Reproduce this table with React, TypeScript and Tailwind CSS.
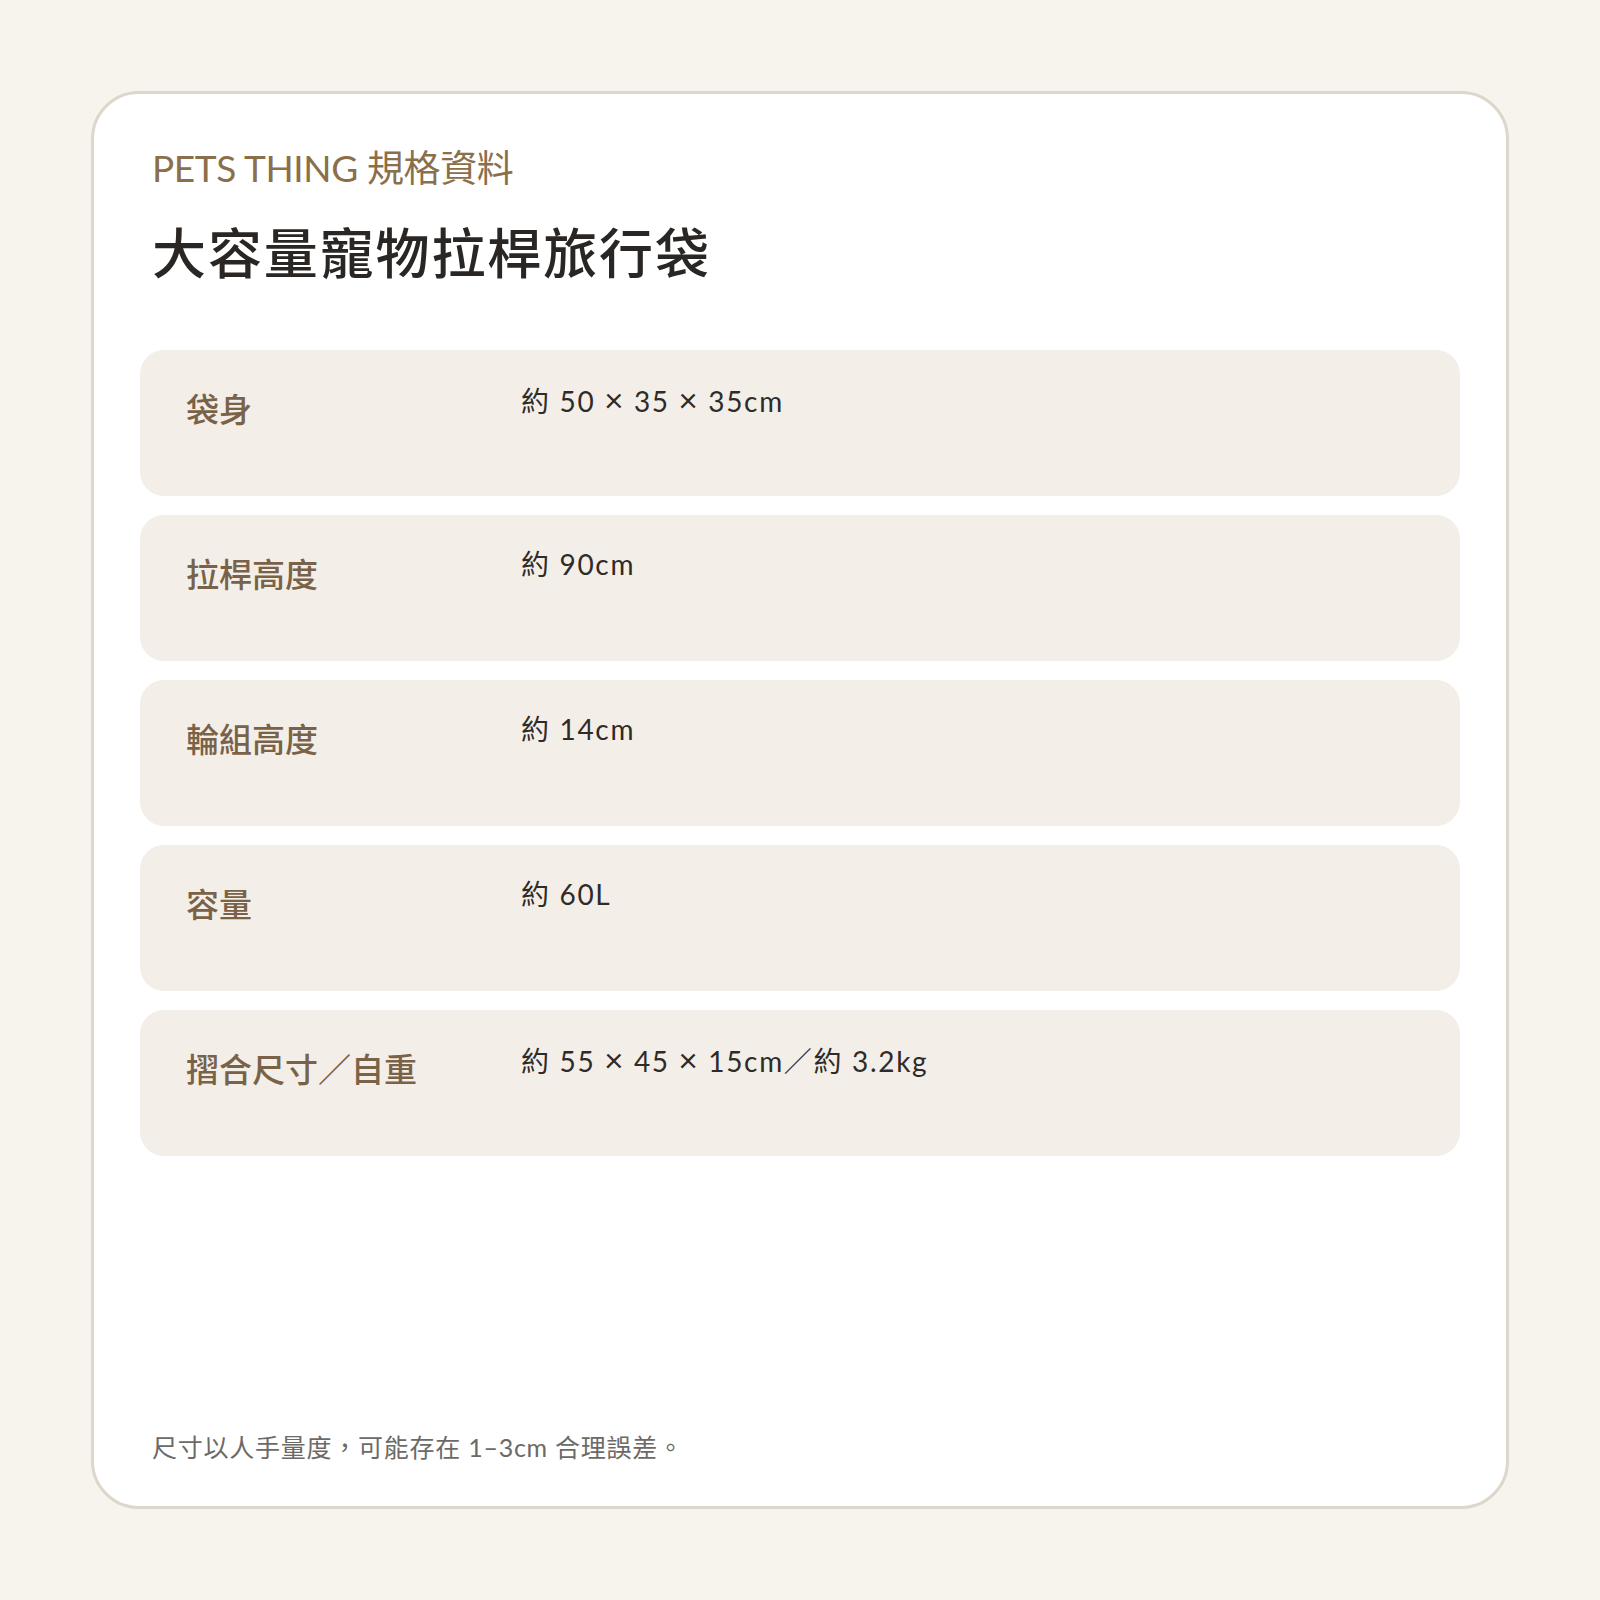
import React from "react"

const specs = [
  { label: "袋身", value: "約 50 × 35 × 35cm" },
  { label: "拉桿高度", value: "約 90cm" },
  { label: "輪組高度", value: "約 14cm" },
  { label: "容量", value: "約 60L" },
  { label: "摺合尺寸／自重", value: "約 55 × 45 × 15cm／約 3.2kg" },
]

function Value({ text }: { text: string }) {
  const parts = text.split("×")
  return (
    <>
      {parts.map((p, i) => (
        <React.Fragment key={i}>
          {p}
          {i < parts.length - 1 && <span className="text-[33px]">×</span>}
        </React.Fragment>
      ))}
    </>
  )
}

export default function App() {
  return (
    <div className="min-h-[1600px] w-full bg-[#f7f4ee] p-[91px] font-['Lato','Noto_Sans_CJK_TC',sans-serif]">
      <div className="flex h-[1418px] w-[1418px] flex-col rounded-[48px] border-[3px] border-[#ddd6ca] bg-white px-[46px]">
        <header className="pl-[12px] pt-[50px]">
          <p className="text-[37px] leading-[1.3] tracking-[-0.01em] text-[#8b6f4a]">
            PETS THING 規格資料
          </p>
          <h1 className="mt-[24px] font-['Noto_Sans_CJK_TC',sans-serif] text-[54px] font-medium leading-[1.3] tracking-[0.035em] text-[#2a2623]">
            大容量寵物拉桿旅行袋
          </h1>
        </header>

        <div className="mt-[64px] flex flex-col gap-[19px]">
          {specs.map((row) => (
            <div
              key={row.label}
              className="flex h-[146px] items-start rounded-3xl bg-[#f3efe8] px-[46px] pt-[34px]"
            >
              <div className="w-[335px] shrink-0 font-['Noto_Sans_CJK_TC',sans-serif] text-[33px] font-medium leading-[1.5] text-[#7a6248]">
                {row.label}
              </div>
              <div className="flex items-center pt-[1px] text-[28px] leading-[28px] tracking-[0.06em] text-[#2e2b28]">
                <span className="whitespace-pre">
                  <Value text={row.value} />
                </span>
              </div>
            </div>
          ))}
        </div>

        <div className="flex-1" />

        <p className="pb-[40px] pl-[12px] text-[25px] leading-[1.5] tracking-[0.03em] text-[#6c6a67]">
          尺寸以人手量度，可能存在 1–3cm 合理誤差。
        </p>
      </div>
    </div>
  )
}
